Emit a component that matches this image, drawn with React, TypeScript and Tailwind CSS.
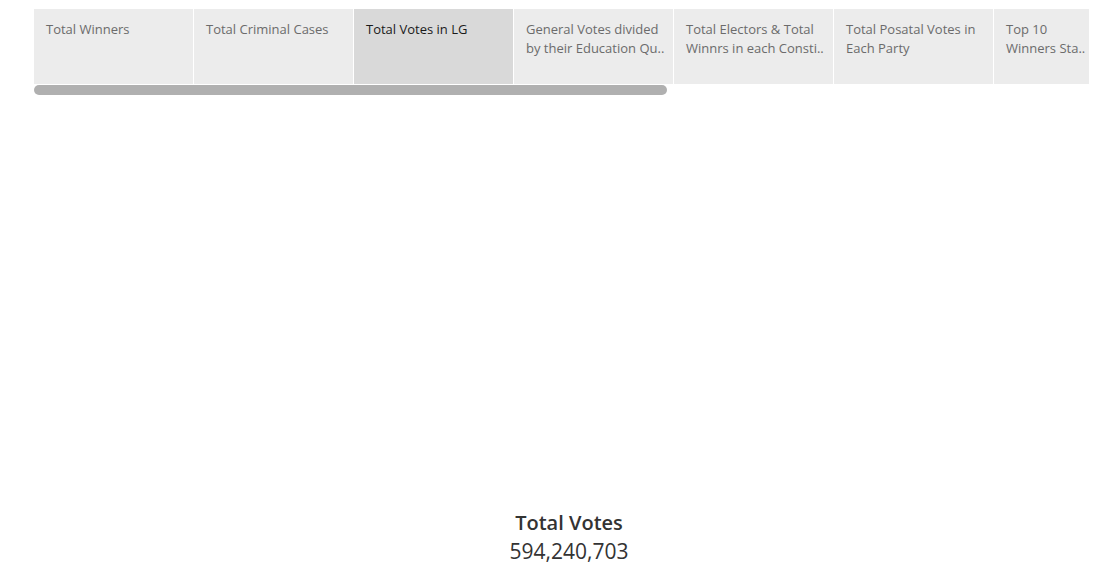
const tabs = [
  { label: ['Total Winners'], active: false },
  { label: ['Total Criminal Cases'], active: false },
  { label: ['Total Votes in LG'], active: true },
  { label: ['General Votes divided', 'by their Education Qu..'], active: false },
  { label: ['Total Electors & Total', 'Winnrs in each Consti..'], active: false },
  { label: ['Total Posatal Votes in', 'Each Party'], active: false },
  { label: ['Top 10', 'Winners Sta..'], active: false },
];

export default function App() {
  return (
    <div className="w-[1100px] h-[570px] bg-white flex flex-col overflow-hidden" style={{ fontFamily: '"Open Sans", "Liberation Sans", sans-serif' }}>
      <div className="pl-[34px] pt-[9px]">
        <div className="w-[1055px] overflow-hidden">
          <div className="flex gap-px w-max">
            {tabs.map((t, i) => (
              <div
                key={i}
                className={`w-[159px] h-[75px] shrink-0 px-3 pt-[11px] text-[13px] leading-[19px] ${
                  t.active ? 'bg-[#d9d9d9] text-[#1a1a1a]' : 'bg-[#ececec] text-[#6b6b6b]'
                }`}
              >
                {t.label.map((l, j) => (
                  <div key={j} className="whitespace-nowrap">{l}</div>
                ))}
              </div>
            ))}
          </div>
        </div>
        <div className="mt-px w-[633px] h-[10px] rounded-full bg-[#b0b0b0]" />
      </div>
      <div className="flex-1" />
      <div className="pl-[38px] pb-[5px] flex flex-col items-center text-[#333333]">
        <div className="text-[20px] leading-[28px] font-semibold">Total Votes</div>
        <div className="text-[21px] leading-[28px]">594,240,703</div>
      </div>
    </div>
  );
}
